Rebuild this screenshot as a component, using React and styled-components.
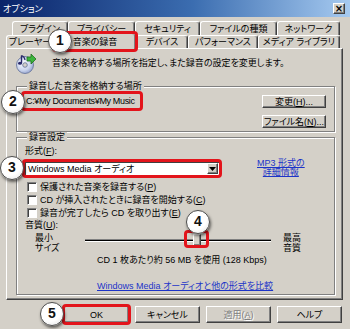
import React from "react";
import styled, { createGlobalStyle, css } from "styled-components";

const FACE = "#d4d0c8";
const RED = "#e3141b";
const LINK = "#1c34c8";

const GlobalStyle = createGlobalStyle`
  * { box-sizing: border-box; }
  html, body { margin: 0; padding: 0; background: ${FACE}; }
  body {
    font-family: "Liberation Sans", "Noto Sans CJK JP", sans-serif;
    font-size: 9px;
    line-height: 12px;
    color: #000;
    font-feature-settings: "palt";
  }
`;

const raised = css`
  border: 1px solid;
  border-color: #fff #404040 #404040 #fff;
  box-shadow: inset -1px -1px #808080;
`;

const sunken = css`
  border: 1px solid;
  border-color: #808080 #fff #fff #808080;
  box-shadow: inset 1px 1px #404040;
`;

// red annotation frame drawn round a part of the dialog
const redMark = css`
  position: relative;
  &::after {
    content: "";
    position: absolute;
    inset: -3px;
    border: 3px solid ${RED};
    border-radius: 4px;
    z-index: 5;
    pointer-events: none;
  }
`;

const Window = styled.div`
  width: 350px;
  height: 329px;
  background: ${FACE};
  display: flex;
  flex-direction: column;
  overflow: hidden;
`;

const TitleBar = styled.div`
  flex: none;
  height: 17px;
  display: flex;
  align-items: center;
  justify-content: space-between;
  padding: 0 5px 0 3px;
  background: linear-gradient(90deg, #0a246a 0%, #3b6db0 55%, #a6caf0 100%);
  color: #fff;
`;

const CloseButton = styled.span`
  width: 12px;
  height: 11px;
  ${raised};
  background: ${FACE};
  color: #000;
  font: bold 10px/8px "DejaVu Sans", sans-serif;
  display: flex;
  align-items: center;
  justify-content: center;
`;

const TabStrip = styled.div`
  margin-top: 4px;
  display: flex;
  flex-direction: column;
`;

const TabRow = styled.div`
  display: flex;
  height: ${(p) => p.$h}px;
  padding-left: ${(p) => p.$indent}px;
`;

const Tab = styled.div`
  flex: none;
  width: ${(p) => p.$w}px;
  height: 100%;
  display: flex;
  align-items: center;
  justify-content: center;
  white-space: nowrap;
  border-top: 1px solid #fff;
  border-left: 1px solid #fff;
  border-right: 1px solid #404040;
  border-radius: 3px 3px 0 0;
  box-shadow: inset -1px 0 #808080;
  ${(p) =>
    p.$active &&
    css`
      z-index: 2;
      height: calc(100% + 3px);
      margin-top: -2px;
      background: ${FACE};
      ${redMark}
    `}
`;

const Panel = styled.div`
  height: 252px;
  margin: 0 7px 0 6px;
  padding: 3px 7px 0 9px;
  ${raised};
  display: flex;
  flex-direction: column;
`;

const Intro = styled.div`
  display: flex;
  align-items: center;
  gap: 15px;
  height: 22px;
  margin-left: -1px;
`;

const GroupBox = styled.fieldset`
  margin: ${(p) => p.$mt}px 0 0;
  padding: ${(p) => p.$pad};
  border: 1px solid #808080;
  box-shadow: inset 1px 1px #fff, 1px 1px #fff;
  min-width: 0;
`;

const Legend = styled.legend`
  margin-left: 3px;
  padding: 0 2px;
  line-height: 11px;
  background: ${FACE};
`;

const LocationRow = styled.div`
  display: flex;
  justify-content: space-between;
  align-items: flex-start;
`;

const PathBox = styled.div`
  width: 116px;
  margin-top: -1px;
  padding: 1px 2px;
  white-space: nowrap;
  letter-spacing: -0.35px;
  ${redMark}
`;

const ButtonColumn = styled.div`
  display: flex;
  flex-direction: column;
  gap: 7px;
`;

const SmallButton = styled.button`
  width: 64px;
  height: 13px;
  padding: 0;
  font: inherit;
  line-height: 10px;
  color: #000;
  background: ${FACE};
  ${raised};
`;

const Label = styled.div`
  padding-left: 1px;
`;

const FormatRow = styled.div`
  display: flex;
  align-items: flex-start;
  margin-top: 4px;
`;

const Dropdown = styled.div`
  width: 196px;
  height: 15px;
  ${sunken};
  background: #fff;
  display: flex;
  align-items: center;
  justify-content: space-between;
  padding: 0 1px 0 3px;
  ${(p) => p.$marked && redMark}
`;

const DropArrow = styled.span`
  width: 11px;
  height: 11px;
  ${raised};
  background: ${FACE};
  display: flex;
  align-items: center;
  justify-content: center;
`;

const InfoLink = styled.a`
  margin: -2px 0 0 37px;
  line-height: 9px;
  color: ${LINK};
  text-align: center;
  text-decoration: underline;
`;

const CheckList = styled.div`
  margin-top: 3px;
`;

const CheckRow = styled.label`
  display: flex;
  align-items: center;
  gap: 3px;
  height: 13px;
  padding-left: 3px;
`;

const CheckBox = styled.span`
  flex: none;
  width: 10px;
  height: 10px;
  ${sunken};
  background: #fff;
`;

const SliderRow = styled.div`
  display: grid;
  grid-template-columns: 50px 186px auto;
  margin-top: 2px;
  padding-left: 11px;
`;

const SideLabel = styled.div`
  line-height: 10px;
  margin-left: ${(p) => p.$ml || 0}px;
`;

const Track = styled.div`
  position: relative;
  height: 20px;
  padding-top: 6px;
`;

const Channel = styled.div`
  height: 3px;
  border-top: 1px solid #808080;
  border-bottom: 1px solid #fff;
  background: #000;
`;

const Thumb = styled.span`
  position: absolute;
  top: 1px;
  width: 8px;
  height: 12px;
  background: ${FACE};
  ${raised};
`;

const ThumbMark = styled.span`
  position: absolute;
  top: -3px;
  width: 25px;
  height: 18px;
  border: 3px solid ${RED};
  border-radius: 4px;
`;

const Note = styled.div`
  margin-top: 1px;
  padding-left: 73px;
`;

const CompareLink = styled.a`
  display: block;
  width: fit-content;
  margin: 14px 0 0 73px;
  color: ${LINK};
  text-decoration: underline;
`;

const ButtonBar = styled.div`
  margin-top: 6px;
  display: flex;
  justify-content: flex-end;
  gap: 6px;
  padding-right: 8px;
`;

const DialogButton = styled.button`
  width: 65px;
  height: 17px;
  padding: 0;
  font: inherit;
  color: ${(p) => (p.disabled ? "#808080" : "#000")};
  text-shadow: ${(p) => (p.disabled ? "1px 1px #fff" : "none")};
  background: ${FACE};
  ${raised};
  ${(p) => p.$marked && redMark}
`;

const Badge = styled.span`
  position: absolute;
  left: ${(p) => p.$x}px;
  top: ${(p) => p.$y}px;
  width: 24px;
  height: 24px;
  border-radius: 50%;
  border: 1.5px solid #4e4e4e;
  background: radial-gradient(circle at 40% 35%, #fff 55%, #dedede 100%);
  box-shadow: 1px 2px 3px rgba(0, 0, 0, 0.55);
  color: #111;
  font: bold 14px/21px "Liberation Sans", sans-serif;
  letter-spacing: 0;
  text-align: center;
  text-shadow: none;
  z-index: 10;
`;

const CdIcon = () => (
  <svg width="22" height="22" viewBox="0 0 22 22">
    <defs>
      <radialGradient id="disc" cx="0.4" cy="0.4" r="0.7">
        <stop offset="0" stopColor="#ffffff" />
        <stop offset="0.6" stopColor="#c9d3ec" />
        <stop offset="1" stopColor="#8796c4" />
      </radialGradient>
    </defs>
    <circle cx="10" cy="13" r="8.5" fill="url(#disc)" stroke="#5f6f98" strokeWidth="0.8" />
    <circle cx="10" cy="13" r="2.3" fill={FACE} stroke="#5f6f98" strokeWidth="0.8" />
    <path d="M6.5 3.5 V11" stroke="#2a2a6a" strokeWidth="1.4" />
    <ellipse cx="5" cy="11.3" rx="2" ry="1.5" fill="#2a2a6a" />
    <path d="M6.5 3.5 Q9.5 4.5 10 8" stroke="#2a2a6a" strokeWidth="1.2" fill="none" />
    <path d="M12 5 h4 v-3 l5 5 l-5 5 v-3 h-4 z" fill="#3cb43c" stroke="#1e6e1e" strokeWidth="0.8" />
  </svg>
);

const backTabs = [
  { label: "プラグイン", w: 56 },
  { label: "プライバシー", w: 67 },
  { label: "セキュリティ", w: 65 },
  { label: "ファイルの種類", w: 77 },
  { label: "ネットワーク", w: 63 },
];

const frontTabs = [
  { label: "プレーヤー", w: 48 },
  { label: "音楽の録音", w: 82, active: true },
  { label: "デバイス", w: 52 },
  { label: "パフォーマンス", w: 70 },
  { label: "メディア ライブラリ", w: 82 },
];

const checks = [
  <>保護された音楽を録音する(<u>P</u>)</>,
  <>CD が挿入されたときに録音を開始する(<u>C</u>)</>,
  <>録音が完了したら CD を取り出す(<u>E</u>)</>,
];

const TRACK_W = 186;
const quality = 0.6;

export default function App() {
  const thumbCenter = Math.round(quality * TRACK_W);

  return (
    <>
      <GlobalStyle />
      <Window>
        <TitleBar>
          <span>オプション</span>
          <CloseButton>×</CloseButton>
        </TitleBar>

        <TabStrip>
          <TabRow $h={14} $indent={12}>
            {backTabs.map((t) => (
              <Tab key={t.label} $w={t.w}>
                {t.label}
              </Tab>
            ))}
          </TabRow>
          <TabRow $h={13} $indent={6}>
            {frontTabs.map((t) => (
              <Tab key={t.label} $w={t.w} $active={t.active}>
                {t.label}
                {t.active && <Badge $x={-7} $y={-5}>1</Badge>}
              </Tab>
            ))}
          </TabRow>
        </TabStrip>

        <Panel>
          <Intro>
            <CdIcon />
            <span>音楽を格納する場所を指定し、また録音の設定を変更します。</span>
          </Intro>

          <GroupBox $mt={7} $pad="3px 8px 3px 7px">
            <Legend>録音した音楽を格納する場所</Legend>
            <LocationRow>
              <PathBox>
                C:¥My Documents¥My Music
                <Badge $x={-23} $y={-4}>2</Badge>
              </PathBox>
              <ButtonColumn>
                <SmallButton>変更(<u>H</u>)...</SmallButton>
                <SmallButton>ファイル名(<u>N</u>)...</SmallButton>
              </ButtonColumn>
            </LocationRow>
          </GroupBox>

          <GroupBox $mt={0} $pad="2px 8px 2px 7px">
            <Legend>録音設定</Legend>
            <Label>形式(<u>F</u>):</Label>
            <FormatRow>
              <Dropdown $marked>
                <span>Windows Media オーディオ</span>
                <DropArrow>
                  <svg width="7" height="4" viewBox="0 0 7 4">
                    <path d="M0 0 H7 L3.5 4 Z" fill="#000" />
                  </svg>
                </DropArrow>
                <Badge $x={-25} $y={-6}>3</Badge>
              </Dropdown>
              <InfoLink href="#mp3">
                MP3 形式の
                <br />
                詳細情報
              </InfoLink>
            </FormatRow>

            <CheckList>
              {checks.map((c, i) => (
                <CheckRow key={i}>
                  <CheckBox />
                  <span>{c}</span>
                </CheckRow>
              ))}
            </CheckList>

            <Label>音質(<u>U</u>):</Label>
            <SliderRow>
              <SideLabel>
                最小
                <br />
                サイズ
              </SideLabel>
              <Track>
                <Channel />
                <Thumb style={{ left: thumbCenter - 4 }} />
                <ThumbMark style={{ left: thumbCenter - 13 }} />
                <Badge $x={thumbCenter - 11} $y={-23}>4</Badge>
              </Track>
              <SideLabel $ml={12}>
                最高
                <br />
                音質
              </SideLabel>
            </SliderRow>

            <Note>CD 1 枚あたり約 56 MB を使用 (128 Kbps)</Note>
            <CompareLink href="#compare">Windows Media オーディオと他の形式を比較</CompareLink>
          </GroupBox>
        </Panel>

        <ButtonBar>
          <DialogButton $marked>
            OK
            <Badge $x={-25} $y={-5}>5</Badge>
          </DialogButton>
          <DialogButton>キャンセル</DialogButton>
          <DialogButton disabled>適用(<u>A</u>)</DialogButton>
          <DialogButton>ヘルプ</DialogButton>
        </ButtonBar>
      </Window>
    </>
  );
}
